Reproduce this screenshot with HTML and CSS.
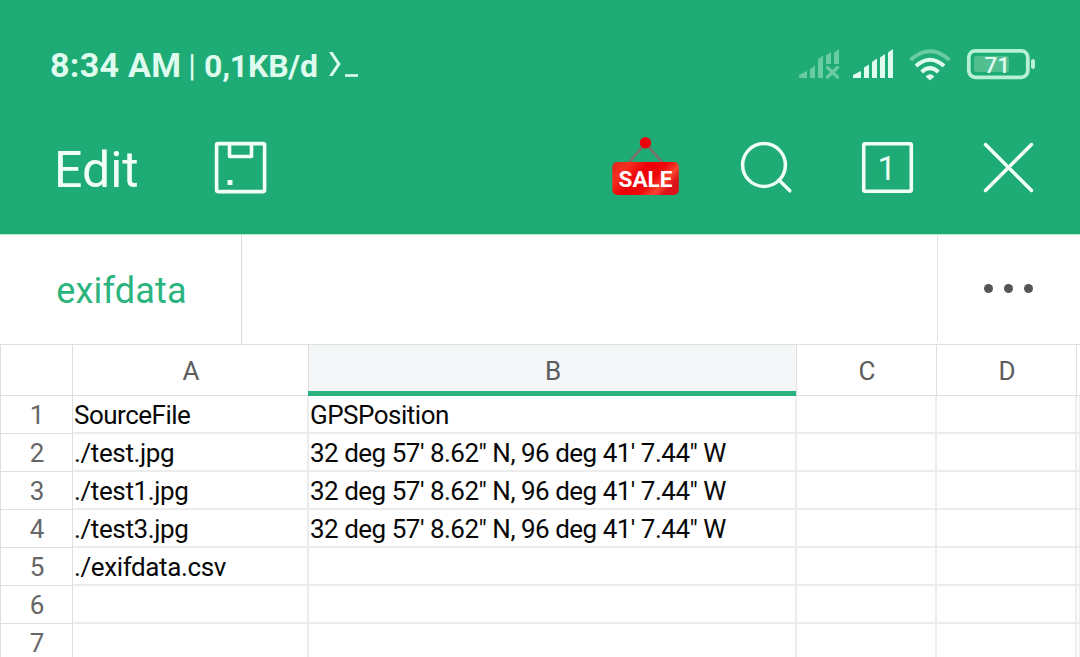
FILE: index.html
```
<!DOCTYPE html>
<html lang="en">
<head>
<meta charset="utf-8">
<title>exifdata</title>
<link rel="stylesheet" href="styles.css">
</head>
<body>
<header class="top">
  <div class="status">
    <div class="status-text">
      <span class="clock">8:34 AM</span><span class="divider">|</span><span class="speed">0,1KB/d</span>
      <svg class="prompt" width="32" height="30" viewBox="0 0 32 30"><path d="M2 2h3.600l8 12-8 12H2l8-12z" fill="#defbee"/><path d="M18 24.200h13v2.600h-13z" fill="#defbee"/></svg>
    </div>
    <svg class="status-icons" width="240" height="34" viewBox="797 47 240 34">
      <g fill="#69cba0">
        <path d="M799 78v-3l8-4v7zM810 78V69l5-3.500V78zM818 78V59.500l5-4V78zM826 64V55.500l5-3.500V64zM834 64V53l5-4V64z"/>
        <path d="M827.500 67.500l10 9.500M837.500 67.500l-10 9.500" stroke="#69cba0" stroke-width="3.400" stroke-linecap="round"/>
      </g>
      <path fill="#defbee" d="M853 78v-3l8-4v7zM864 78V67.500l5-3V78zM872 78V62l5-3.500V78zM880 78V57.500l5-3.500V78zM888 78V52.500l5-3.500V78z"/>
      <g fill="none" stroke="#defbee" stroke-width="4">
        <path d="M910.600 60Q930 42.500 949.400 60" stroke="#69cba0"/>
        <path d="M916 66Q930 53.500 944 66"/>
        <path d="M921.600 72Q930 64.400 938.400 72"/>
      </g>
      <path d="M925.600 76.500Q930 72 934.400 76.500L930 80.500z" fill="#defbee"/>
      <rect x="968.800" y="50.800" width="59" height="26.500" rx="6.500" fill="none" stroke="#b8f0d5" stroke-width="3.700"/>
      <rect x="974" y="56" width="35" height="16" rx="2.500" fill="#53bf91"/>
      <rect x="1031" y="59" width="4" height="10" rx="2" fill="#b8f0d5"/>
      <text x="997.300" y="73" text-anchor="middle" class="battery">71</text>
    </svg>
  </div>
  <nav class="toolbar">
    <span class="edit">Edit</span>
    <svg class="save" width="54" height="54" viewBox="214 141 54 54" fill="none" stroke="#f2fff9" stroke-width="3.600" stroke-linejoin="round"><rect x="216.600" y="143.600" width="48" height="48" rx="1.500"/><path d="M229.500 144v12.500h22V144"/><path d="M227.500 180h5v5h-5z" fill="#f2fff9" stroke="none"/></svg>
    <svg class="sale" width="68" height="60" viewBox="612 136 68 60">
      <defs><linearGradient id="red" x1="0" y1="0" x2="1" y2=".45"><stop offset="0" stop-color="#e0201d"/><stop offset=".22" stop-color="#f5301f"/><stop offset=".48" stop-color="#ed0009"/><stop offset=".7" stop-color="#ee080c"/><stop offset=".88" stop-color="#fb4430"/><stop offset="1" stop-color="#dd121b"/></linearGradient></defs>
      <path d="M629 162.500l16.400-19 17.200 19" fill="none" stroke="#7d6f66" stroke-width="2.600"/>
      <circle cx="645.400" cy="142.700" r="5.700" fill="#ed000b"/>
      <rect x="612.300" y="162" width="66.500" height="33" rx="5" fill="url(#red)"/>
      <text x="645.500" y="186.800" text-anchor="middle" class="sale-text" textLength="54">SALE</text>
    </svg>
    <svg class="search" width="54" height="54" viewBox="740 141 54 54" fill="none" stroke="#effff8" stroke-width="3.500" stroke-linecap="round"><circle cx="764" cy="165" r="21.400"/><path d="M779 180l10.800 10.800"/></svg>
    <svg class="window" width="54" height="54" viewBox="861 141 54 54"><rect x="863.700" y="143.700" width="47.600" height="47.600" rx="1.500" fill="none" stroke="#f2fff9" stroke-width="3.600" stroke-linejoin="round"/><text x="886.700" y="180" text-anchor="middle" class="count">1</text></svg>
    <svg class="close" width="54" height="54" viewBox="982 141 54 54" stroke="#f2fff9" stroke-width="3.500" stroke-linecap="round"><path d="M985.500 144.500l46 46M1031.500 144.500l-46 46"/></svg>
  </nav>
</header>
<section class="tabs">
  <div class="tab">exifdata</div>
  <div class="more"><i></i><i></i><i></i></div>
</section>
<main class="sheet">
  <div class="row heads"><b></b><span>A</span><span class="selected">B</span><span>C</span><span>D</span><span></span></div>
  <div class="row"><b>1</b><span>SourceFile</span><span>GPSPosition</span><span></span><span></span><span></span></div>
  <div class="row"><b>2</b><span class="path">./test.jpg</span><span>32 deg 57' 8.62" N, 96 deg 41' 7.44" W</span><span></span><span></span><span></span></div>
  <div class="row"><b>3</b><span class="path">./test1.jpg</span><span>32 deg 57' 8.62" N, 96 deg 41' 7.44" W</span><span></span><span></span><span></span></div>
  <div class="row"><b>4</b><span class="path">./test3.jpg</span><span>32 deg 57' 8.62" N, 96 deg 41' 7.44" W</span><span></span><span></span><span></span></div>
  <div class="row"><b>5</b><span class="path">./exifdata.csv</span><span></span><span></span><span></span><span></span></div>
  <div class="row"><b>6</b><span></span><span></span><span></span><span></span><span></span></div>
  <div class="row"><b>7</b><span></span><span></span><span></span><span></span><span></span></div>
</main>
</body>
</html>
```
FILE: styles.css
```
* { box-sizing: border-box; }
body { margin: 0; height: 657px; overflow: hidden; background: #fff; font-family: Roboto, sans-serif; }
svg { display: block; flex: none; }
.top { height: 235px; background: #1eab75; border-bottom: 1px solid #b2ebd3; }
.status { height: 128px; padding: 47px 43px 0 50px; display: flex; justify-content: space-between; align-items: flex-start; }
.status-text { display: flex; color: #defbee; font-weight: 700; white-space: nowrap; }
.clock { width: 130px; font-size: 34px; line-height: 37px; letter-spacing: .3px; }
.divider { width: 24px; text-align: center; font-size: 31px; line-height: 38px; font-weight: 400; }
.speed { width: 123px; font-size: 32px; line-height: 38px; letter-spacing: -.2px; }
.prompt { margin-top: 3px; }
.battery { font-size: 22.5px; font-weight: 500; fill: #defbee; }
.toolbar { height: 106px; display: flex; padding: 8px 44px 0 54px; color: #f2fff9; }
.edit { width: 160px; font-size: 50px; line-height: 69px; }
.save, .search, .window, .close { margin-top: 5px; }
.sale { margin-left: 344px; }
.sale-text { font-size: 22.5px; font-weight: 700; fill: #fff; }
.search { margin-left: 60px; }
.window { margin-left: 67px; }
.count { font-size: 33px; fill: #e9fff5; }
.close { margin-left: 67px; }
.tabs { height: 109px; display: flex; justify-content: space-between; }
.tab { width: 242px; padding-left: 2px; border-right: 1px solid #d9dcdb; text-align: center; font-size: 36px; line-height: 113px; height: 109px; color: #2bb47e; letter-spacing: .2px; }
.more { width: 143px; height: 105px; margin-top: 1px; border-left: 1px solid #e0e0e0; display: flex; gap: 10.5px; padding: 47.5px 0 0 45.5px; }
.more i { width: 9.5px; height: 9.5px; border-radius: 50%; background: #555; }
.sheet { border-top: 1px solid #dedfdf; border-left: 1px solid #dedfdf; }
.row { height: 38px; display: grid; grid-template-columns: 72px 236px 488px 140px 140px 4px; font-size: 26px; line-height: 38px; color: #080808; white-space: nowrap; }
.row b { height: 38px; padding-left: 1px; border-right: 1px solid #dedfdf; border-bottom: 1px solid #dedfdf; text-align: center; font-weight: 400; color: #666; }
.row span { border-right: 2px solid #ececec; border-bottom: 2px solid #ececec; padding-left: 1px; height: 38px; letter-spacing: -.5px; }
.row .path { letter-spacing: -.38px; }
.heads { height: 51px; line-height: 52px; }
.heads b { height: 51px; }
.row.heads span { height: 51px; border-right: 1px solid #dedfdf; border-bottom: 1px solid #dedfdf; text-align: center; color: #5c5c5c; letter-spacing: 0; }
.row.heads .selected { position: relative; background: #f4f6f8; }
.selected::after { content: ""; position: absolute; left: -1px; right: 0; bottom: -1px; height: 5px; background: #2bb27f; }
```
